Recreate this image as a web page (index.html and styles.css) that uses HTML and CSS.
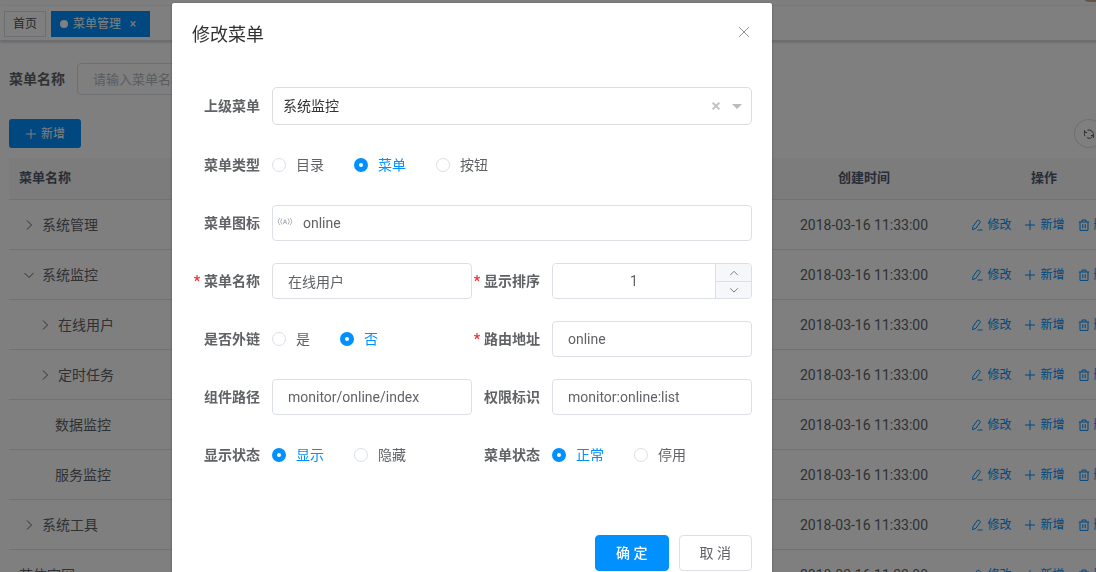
FILE: index.html
```html
<!DOCTYPE html>
<html lang="zh-CN">
<head>
<meta charset="utf-8">
<title>菜单管理</title>
<link rel="stylesheet" href="styles.css">
</head>
<body>
<svg class="sprite" aria-hidden="true">
  <symbol id="plus" viewBox="0 0 12 12"><path d="M6 1v10M1 6h10"/></symbol>
  <symbol id="edit" viewBox="0 0 12 12"><path d="M2 7.500 6.200 1.600Q7 .7 8 1.400L8.800 2Q9.600 2.700 9 3.600L4.900 9.300 1.600 10.700ZM6.500 11h5"/></symbol>
  <symbol id="trash" viewBox="0 0 12 12"><path d="M.8 3h10.400M4 3V1h4v2M2 3v8.400h8V3M4.800 5.200v4M7.200 5.200v4"/></symbol>
  <symbol id="right" viewBox="0 0 12 12"><path d="m4 1.500 4.500 4.500L4 10.500"/></symbol>
  <symbol id="down" viewBox="0 0 12 12"><path d="m1.500 4 4.500 4.500L10.500 4"/></symbol>
  <symbol id="up" viewBox="0 0 12 12"><path d="M1.500 8.500 6 4l4.500 4.500"/></symbol>
  <symbol id="close" viewBox="0 0 12 12"><path d="m1 1 10 10M11 1 1 11"/></symbol>
  <symbol id="refresh" viewBox="0 0 12 12"><path d="M1.800 8.200A4.500 4.500 0 0 1 2.300 3.500M4.500 2.200A4.500 4.500 0 0 1 10.200 8M9.700 8.500A4.500 4.500 0 0 1 4 9.800M1.500 2.200v2.300h2.600M10.500 9.800V7.500H7.900"/></symbol>
</svg>

<div class="app">
  <header class="topbar"><span class="avatar"></span></header>
  <nav class="tabs">
    <a class="tab" href="#home">首页</a>
    <a class="tab tab-active" href="#menu"><span class="dot"></span>菜单管理<span class="tab-close">×</span></a>
  </nav>
  <main class="content">
    <form class="search">
      <label for="query">菜单名称</label>
      <input id="query" class="query" type="text" placeholder="请输入菜单名称">
    </form>
    <div class="toolbar">
      <button class="add" type="button"><svg class="icon"><use href="#plus"/></svg>新增</button>
      <button class="round" type="button" aria-label="刷新"><svg class="icon"><use href="#refresh"/></svg></button>
    </div>
    <table class="grid">
      <colgroup><col><col class="col-time"><col class="col-ops"></colgroup>
      <thead><tr><th class="name">菜单名称</th><th>创建时间</th><th>操作</th></tr></thead>
      <tbody>
        <tr><td class="name"><svg class="arrow"><use href="#right"/></svg>系统管理</td><td>2018-03-16 11:33:00</td><td class="ops"><a href="#e"><svg class="icon"><use href="#edit"/></svg>修改</a><a href="#a"><svg class="icon"><use href="#plus"/></svg>新增</a><a href="#d"><svg class="icon"><use href="#trash"/></svg>删除</a></td></tr>
        <tr><td class="name"><svg class="arrow"><use href="#down"/></svg>系统监控</td><td>2018-03-16 11:33:00</td><td class="ops"><a href="#e"><svg class="icon"><use href="#edit"/></svg>修改</a><a href="#a"><svg class="icon"><use href="#plus"/></svg>新增</a><a href="#d"><svg class="icon"><use href="#trash"/></svg>删除</a></td></tr>
        <tr><td class="name child"><svg class="arrow"><use href="#right"/></svg>在线用户</td><td>2018-03-16 11:33:00</td><td class="ops"><a href="#e"><svg class="icon"><use href="#edit"/></svg>修改</a><a href="#a"><svg class="icon"><use href="#plus"/></svg>新增</a><a href="#d"><svg class="icon"><use href="#trash"/></svg>删除</a></td></tr>
        <tr><td class="name child"><svg class="arrow"><use href="#right"/></svg>定时任务</td><td>2018-03-16 11:33:00</td><td class="ops"><a href="#e"><svg class="icon"><use href="#edit"/></svg>修改</a><a href="#a"><svg class="icon"><use href="#plus"/></svg>新增</a><a href="#d"><svg class="icon"><use href="#trash"/></svg>删除</a></td></tr>
        <tr><td class="name leaf">数据监控</td><td>2018-03-16 11:33:00</td><td class="ops"><a href="#e"><svg class="icon"><use href="#edit"/></svg>修改</a><a href="#a"><svg class="icon"><use href="#plus"/></svg>新增</a><a href="#d"><svg class="icon"><use href="#trash"/></svg>删除</a></td></tr>
        <tr><td class="name leaf">服务监控</td><td>2018-03-16 11:33:00</td><td class="ops"><a href="#e"><svg class="icon"><use href="#edit"/></svg>修改</a><a href="#a"><svg class="icon"><use href="#plus"/></svg>新增</a><a href="#d"><svg class="icon"><use href="#trash"/></svg>删除</a></td></tr>
        <tr><td class="name"><svg class="arrow"><use href="#right"/></svg>系统工具</td><td>2018-03-16 11:33:00</td><td class="ops"><a href="#e"><svg class="icon"><use href="#edit"/></svg>修改</a><a href="#a"><svg class="icon"><use href="#plus"/></svg>新增</a><a href="#d"><svg class="icon"><use href="#trash"/></svg>删除</a></td></tr>
        <tr><td class="name">若依官网</td><td>2018-03-16 11:33:00</td><td class="ops"><a href="#e"><svg class="icon"><use href="#edit"/></svg>修改</a><a href="#a"><svg class="icon"><use href="#plus"/></svg>新增</a><a href="#d"><svg class="icon"><use href="#trash"/></svg>删除</a></td></tr>
      </tbody>
    </table>
  </main>
</div>

<div class="mask">
  <section class="dialog" role="dialog" aria-labelledby="dialog-title">
    <header class="dialog-head">
      <h2 id="dialog-title">修改菜单</h2>
      <button class="dialog-close" type="button" aria-label="关闭"><svg class="icon"><use href="#close"/></svg></button>
    </header>
    <form class="form">
      <div class="field wide">
        <label class="label" for="parent">上级菜单</label>
        <div class="control">
          <select id="parent" class="input select"><option>系统监控</option></select>
          <div class="select-tools">
            <button class="clear" type="button" aria-label="清除"><svg class="icon"><use href="#close"/></svg></button>
            <span class="caret"></span>
          </div>
        </div>
      </div>
      <div class="field wide">
        <span class="label" id="type-label">菜单类型</span>
        <div class="radios" role="radiogroup" aria-labelledby="type-label">
          <label class="radio"><input type="radio" name="type"><span>目录</span></label>
          <label class="radio"><input type="radio" name="type" checked><span>菜单</span></label>
          <label class="radio"><input type="radio" name="type"><span>按钮</span></label>
        </div>
      </div>
      <div class="field wide">
        <label class="label" for="icon">菜单图标</label>
        <div class="control">
          <input id="icon" class="input prefixed" type="text" value="online">
          <svg class="prefix" viewBox="0 0 16 12"><path d="M3 2Q-.5 5.500 3 9M5 2.500Q2.300 5.500 5 8.500M13 2q3.500 3.500 0 7M11 2.500q2.700 3 0 6M6.300 8 8 3.500 9.700 8M7 6.500h2"/></svg>
        </div>
      </div>
      <div class="field">
        <label class="label required" for="name">菜单名称</label>
        <div class="control"><input id="name" class="input" type="text" value="在线用户"></div>
      </div>
      <div class="field">
        <label class="label required" for="sort">显示排序</label>
        <div class="control number">
          <input id="sort" type="text" inputmode="numeric" value="1">
          <div class="steps">
            <button type="button" aria-label="增加"><svg class="icon"><use href="#up"/></svg></button>
            <button type="button" aria-label="减少"><svg class="icon"><use href="#down"/></svg></button>
          </div>
        </div>
      </div>
      <div class="field">
        <span class="label" id="link-label">是否外链</span>
        <div class="radios" role="radiogroup" aria-labelledby="link-label">
          <label class="radio"><input type="radio" name="link"><span>是</span></label>
          <label class="radio"><input type="radio" name="link" checked><span>否</span></label>
        </div>
      </div>
      <div class="field">
        <label class="label required" for="path">路由地址</label>
        <div class="control"><input id="path" class="input" type="text" value="online"></div>
      </div>
      <div class="field">
        <label class="label" for="component">组件路径</label>
        <div class="control"><input id="component" class="input" type="text" value="monitor/online/index"></div>
      </div>
      <div class="field">
        <label class="label" for="perms">权限标识</label>
        <div class="control"><input id="perms" class="input" type="text" value="monitor:online:list"></div>
      </div>
      <div class="field">
        <span class="label" id="visible-label">显示状态</span>
        <div class="radios" role="radiogroup" aria-labelledby="visible-label">
          <label class="radio"><input type="radio" name="visible" checked><span>显示</span></label>
          <label class="radio"><input type="radio" name="visible"><span>隐藏</span></label>
        </div>
      </div>
      <div class="field">
        <span class="label" id="status-label">菜单状态</span>
        <div class="radios" role="radiogroup" aria-labelledby="status-label">
          <label class="radio"><input type="radio" name="status" checked><span>正常</span></label>
          <label class="radio"><input type="radio" name="status"><span>停用</span></label>
        </div>
      </div>
    </form>
    <footer class="dialog-foot">
      <button class="btn primary" type="button">确 定</button>
      <button class="btn" type="button">取 消</button>
    </footer>
  </section>
</div>
</body>
</html>
```

FILE: styles.css
```css
* { box-sizing: border-box; }
html, body { height: 100%; }
body {
  margin: 0;
  overflow: hidden;
  background: #fff;
  color: #606266;
  font: 14px/20px Roboto, "Noto Sans CJK SC", sans-serif;
}
button, input, select { margin: 0; font: inherit; color: inherit; }
button { padding: 0; border: 0; background: none; }
a { color: inherit; text-decoration: none; }
svg { fill: none; stroke: currentColor; stroke-width: 1; }
.sprite { display: none; }
.icon { width: 12px; height: 12px; flex: none; }

/* Page behind the dialog */
.app { margin-right: -28px; }
.topbar { display: flex; justify-content: flex-end; height: 6px; padding-right: 4px; overflow: hidden; background: #fcfcfc; }
.avatar { width: 40px; height: 40px; margin-top: -38px; border-radius: 10px; background: #c8a890; }
.tabs {
  display: flex;
  align-items: center;
  gap: 5px;
  height: 35px;
  padding: 2px 4px 0;
  border-bottom: 1px solid #d8dce5;
  box-shadow: 0 1px 3px rgba(0, 0, 0, .24);
}
.tab {
  display: flex;
  align-items: center;
  height: 26px;
  padding: 0 8px;
  border: 1px solid #d8dce5;
  color: #495060;
  font-size: 12px;
}
.tab-active { border-color: #0090ff; background: #0090ff; color: #fff; }
.dot { width: 8px; height: 8px; margin-right: 5px; border-radius: 50%; background: #fff; }
.tab-close { width: 16px; margin-left: 4px; text-align: center; }
.content { padding: 22px 0 0 9px; }
.search { display: flex; align-items: center; gap: 12px; font-weight: 700; }
.query { width: 240px; height: 32px; padding: 0 15px; border: 1px solid #dcdfe6; border-radius: 4px; background: #fff; font-size: 13px; font-weight: 400; }
.query::placeholder { color: #b4b8c0; }
.toolbar { display: flex; justify-content: space-between; align-items: center; padding: 24px 20px 10px 0; }
.add { display: flex; align-items: center; gap: 4px; height: 29px; padding: 0 16px; border-radius: 3px; background: #0090ff; color: #fff; font-size: 12px; }
.round { display: flex; align-items: center; justify-content: center; width: 30px; height: 29px; border: 1px solid #dcdfe6; border-radius: 50%; }
.grid { width: 100%; border-spacing: 0; table-layout: fixed; }
.col-time { width: 200px; }
.col-ops { width: 160px; }
.grid th { height: 42px; padding: 0 0 2px; border-bottom: 1px solid #dfe6ec; background: #f8f8f9; color: #515a6e; font-size: 13px; }
.grid td { height: 50px; padding: 0; border-bottom: 1px solid #dfe6ec; text-align: center; }
.grid .name { padding-left: 10px; text-align: left; }
.grid .child { padding-left: 26px; }
.grid .leaf { padding-left: 46px; }
.arrow { width: 12px; height: 12px; margin: 0 7px 0 4px; vertical-align: -1px; }
.grid .ops { font-size: 12px; color: #0090ff; white-space: nowrap; }
.ops a { display: inline-flex; align-items: center; gap: 4px; margin: 0 6px 0 7px; vertical-align: middle; }

/* Dialog */
.mask { position: fixed; inset: 0; overflow: hidden; padding: 3px 0 0 172px; background: rgba(0, 0, 0, .5); }
.dialog { max-width: 600px; border-radius: 2px; background: #fff; box-shadow: 0 1px 3px rgba(0, 0, 0, .3); }
.dialog-head { display: flex; justify-content: space-between; align-items: flex-start; padding: 20px 20px 10px; }
.dialog-head h2 { margin: 0; color: #303133; font-size: 18px; line-height: 24px; font-weight: 400; }
.dialog-close { display: flex; padding: 3px 2px; color: #909399; }
.form { display: grid; grid-template-columns: repeat(2, minmax(0, 1fr)); row-gap: 22px; padding: 30px 20px 52px; }
.field { display: flex; align-items: center; min-height: 36px; }
.wide { grid-column: 1 / -1; }
.label { flex: none; display: flex; justify-content: flex-end; width: 80px; padding-right: 12px; font-weight: 700; white-space: nowrap; }
.required::before { content: "*"; margin-right: 4px; color: #f03030; }
.control { position: relative; flex: 1; min-width: 0; display: flex; }
.input { width: 100%; height: 36px; padding: 0 15px; border: 1px solid #dcdfe6; border-radius: 4px; background: #fff; outline: 0; }
.select { height: 38px; padding: 0 10px; border-color: #ddd; border-radius: 5px; color: #333; appearance: none; }
.select-tools { position: absolute; top: 0; right: 10px; height: 100%; display: flex; align-items: center; gap: 12px; color: #c4c4c4; }
.clear { display: flex; }
.clear .icon { width: 8px; height: 8px; stroke-width: 3; }
.caret { border: 5px solid transparent; border-top-color: #bbb; border-bottom: 0; }
.prefixed { padding-left: 30px; }
.prefix { position: absolute; left: 5px; top: 11px; width: 16px; height: 12px; color: #b0b3ba; }
.number { height: 36px; border: 1px solid #dcdfe6; border-radius: 4px; overflow: hidden; }
.number input { flex: 1; min-width: 0; border: 0; padding: 0; background: #fff; text-align: center; outline: 0; }
.steps { display: grid; grid-template-rows: 1fr 1fr; width: 36px; border-left: 1px solid #dcdfe6; background: #f5f7fa; }
.steps button { display: flex; align-items: center; justify-content: center; }
.steps button + button { border-top: 1px solid #dcdfe6; }
.steps .icon { width: 10px; height: 10px; }
.radios { display: flex; gap: 30px; }
.radio { display: flex; align-items: center; gap: 10px; }
.radio input { appearance: none; width: 14px; height: 14px; border: 1px solid #dcdfe6; border-radius: 50%; background: #fff; }
.radio input:checked { border: 5px solid #0090ff; }
.radio input:checked + span { color: #0090ff; }
.dialog-foot { display: flex; justify-content: flex-end; gap: 10px; padding: 10px 20px 20px; }
.btn { height: 36px; padding: 0 20px; border: 1px solid #dcdfe6; border-radius: 4px; background: #fff; }
.primary { border-color: #0090ff; background: #0090ff; color: #fff; font-weight: 500; }
```
